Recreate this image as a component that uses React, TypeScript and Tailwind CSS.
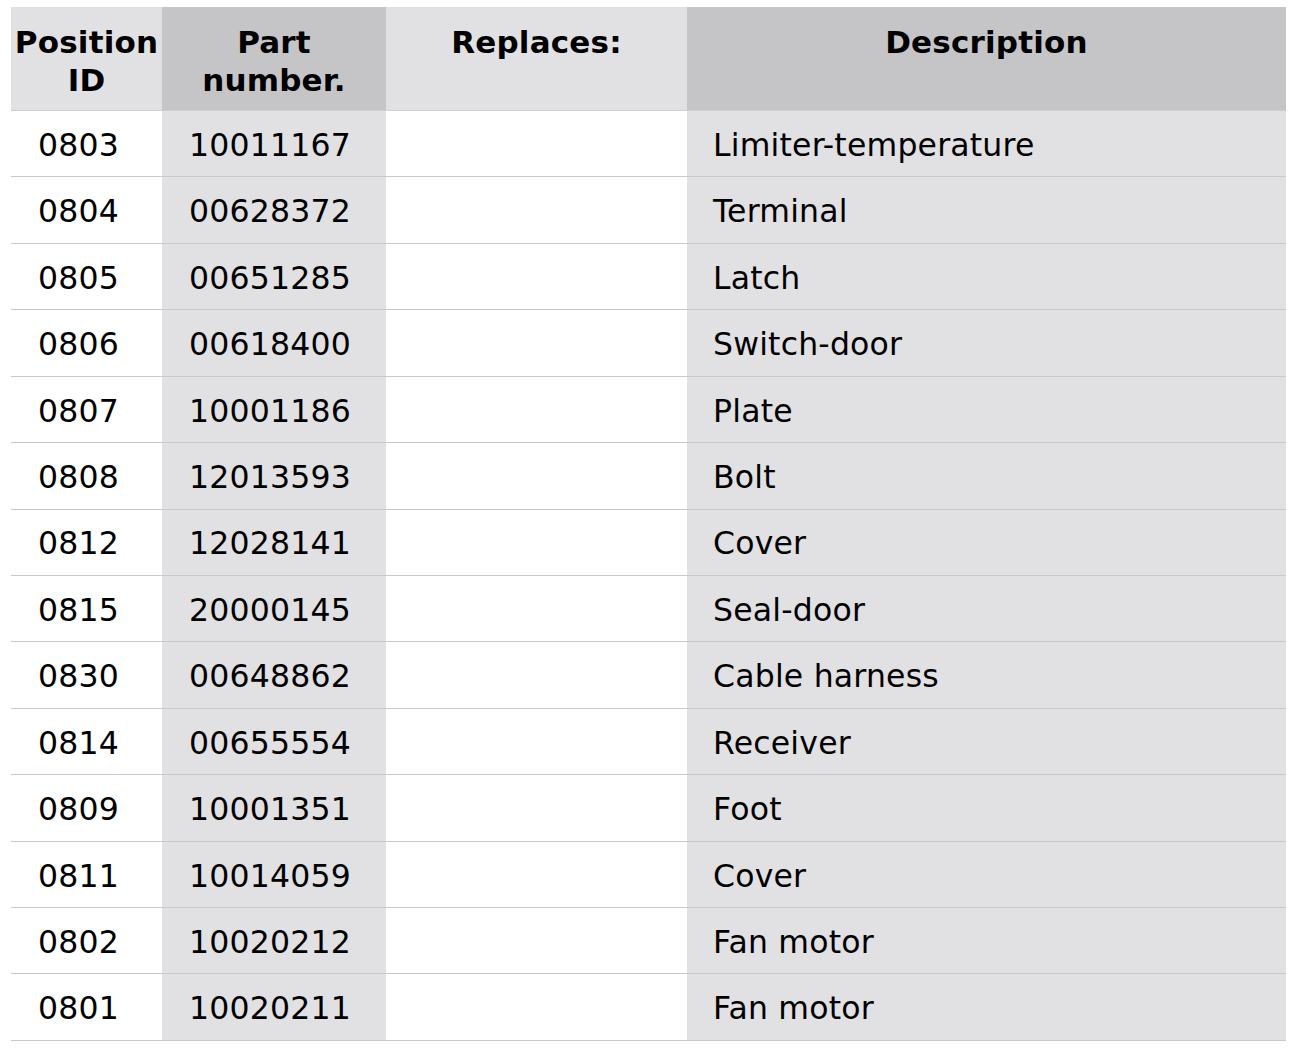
import React from "react";

const rows: [string, string, string][] = [
  ["0803", "10011167", "Limiter-temperature"],
  ["0804", "00628372", "Terminal"],
  ["0805", "00651285", "Latch"],
  ["0806", "00618400", "Switch-door"],
  ["0807", "10001186", "Plate"],
  ["0808", "12013593", "Bolt"],
  ["0812", "12028141", "Cover"],
  ["0815", "20000145", "Seal-door"],
  ["0830", "00648862", "Cable harness"],
  ["0814", "00655554", "Receiver"],
  ["0809", "10001351", "Foot"],
  ["0811", "10014059", "Cover"],
  ["0802", "10020212", "Fan motor"],
  ["0801", "10020211", "Fan motor"],
];

export default function App() {
  return (
    <div className="bg-white w-[1299px] h-[1048px] pt-[7px] pl-[11px] font-['DejaVu_Sans',Verdana,sans-serif] text-black">
      <div className="w-[1275px]">
        <div className="grid grid-cols-[151px_224px_301px_599px] h-[104px] border-b border-[#cfcfd1] font-bold text-[31px] leading-[38px] text-center tracking-[0.2px]">
          <div className="bg-[#e1e1e3] pt-[16px]">Position<br />ID</div>
          <div className="bg-[#c5c5c7] pt-[16px]">Part<br />number.</div>
          <div className="bg-[#e1e1e3] pt-[16px]">Replaces:</div>
          <div className="bg-[#c5c5c7] pt-[16px]">Description</div>
        </div>
        {rows.map((r, i) => (
          <div
            key={i}
            className="grid grid-cols-[151px_224px_301px_599px] h-[66.43px] border-b border-[#c9c9cb] text-[31.5px] leading-none tracking-[0.2px]"
          >
            <div className="bg-white flex items-center pl-[27px] pt-[4px]">{r[0]}</div>
            <div className="bg-[#e1e1e3] flex items-center pl-[27px] pt-[4px]">{r[1]}</div>
            <div className="bg-white"></div>
            <div className="bg-[#e1e1e3] flex items-center pl-[26px] pt-[4px]">{r[2]}</div>
          </div>
        ))}
      </div>
    </div>
  );
}
